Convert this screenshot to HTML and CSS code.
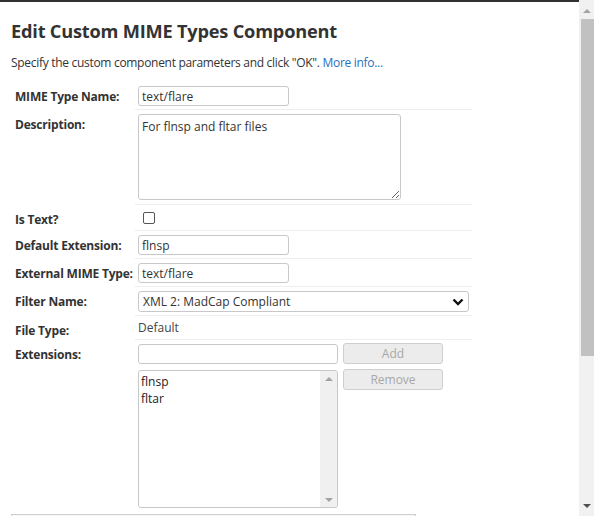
FILE: index.html
```html
<!DOCTYPE html>
<html lang="en">
<head>
  <meta charset="UTF-8">
  <title>Edit Custom MIME Types Component</title>
  <link rel="stylesheet" href="styles.css">
</head>
<body>
  <div class="window">
    <div class="page">
      <h1>Edit Custom MIME Types Component</h1>
      <p class="intro">Specify the custom component parameters and click "OK". <a href="#">More info...</a></p>

      <table class="form">
        <tr>
          <th>MIME Type Name:</th>
          <td><input type="text" class="short" value="text/flare"></td>
        </tr>
        <tr>
          <th>Description:</th>
          <td><textarea>For flnsp and fltar files</textarea></td>
        </tr>
        <tr>
          <th>Is Text?</th>
          <td class="check-cell"><span class="checkbox"></span></td>
        </tr>
        <tr>
          <th>Default Extension:</th>
          <td><input type="text" class="short" value="flnsp"></td>
        </tr>
        <tr>
          <th>External MIME Type:</th>
          <td><input type="text" class="short" value="text/flare"></td>
        </tr>
        <tr>
          <th>Filter Name:</th>
          <td>
            <div class="select">
              <span>XML 2: MadCap Compliant</span>
              <svg width="12" height="8" viewBox="0 0 12 8"><path d="M1.5 1.5 L6 6 L10.5 1.5" fill="none" stroke="#111" stroke-width="2.4"/></svg>
            </div>
          </td>
        </tr>
        <tr>
          <th>File Type:</th>
          <td class="plain">Default</td>
        </tr>
        <tr class="last">
          <th>Extensions:</th>
          <td>
            <div class="ext">
              <div class="ext-col">
                <input type="text" class="ext-input" value="">
                <div class="listbox">
                  <div class="items">
                    <div>flnsp</div>
                    <div>fltar</div>
                  </div>
                  <div class="track">
                    <span class="arrow up light"></span>
                    <span class="arrow down light"></span>
                  </div>
                </div>
              </div>
              <div class="btn-col">
                <button disabled>Add</button>
                <button disabled>Remove</button>
              </div>
            </div>
          </td>
        </tr>
      </table>

      <div class="next-box"></div>
    </div>

    <div class="scrollbar">
      <span class="arrow up light"></span>
      <div class="thumb"></div>
      <span class="arrow down dark"></span>
    </div>
  </div>
</body>
</html>
```

FILE: styles.css
```css
* {
  box-sizing: border-box;
}

html, body {
  margin: 0;
  height: 100%;
  overflow: hidden;
}

body {
  font-family: "Open Sans", "Noto Sans", sans-serif;
  font-size: 12px;
  color: #333;
  background: #fff;
}

.window {
  display: flex;
  height: 100%;
}

.page {
  flex: 1;
  border-top: 2px solid #2f3133;
  padding: 0 11px;
}

h1 {
  margin: 16px 0 0;
  font-size: 18.2px;
  line-height: 26px;
  font-weight: 700;
  color: #333;
  letter-spacing: -0.2px;
}

.intro {
  margin: 11px 0 11px;
  line-height: 16px;
  letter-spacing: -0.3px;
}

.intro a {
  color: #2870c2;
  text-decoration: none;
}

.form {
  border-collapse: collapse;
}

.form th {
  width: 124px;
  padding: 6px 0 0 4px;
  text-align: left;
  vertical-align: top;
  font-weight: 700;
  white-space: nowrap;
  letter-spacing: -0.2px;
}

.form td {
  width: 337px;
  padding: 4px 3px 3px;
  border-bottom: 1px solid #eeeeee;
  line-height: 0;
}

.form tr.last td {
  border-bottom: none;
  padding-bottom: 0;
}

input[type="text"],
textarea {
  font: inherit;
  font-size: 12px;
  color: #333;
  border: 1px solid #c8c8c8;
  border-radius: 3px;
  padding: 0 3px;
  background: #fff;
  line-height: 17px;
  display: block;
}

input.short {
  width: 151px;
  height: 20px;
}

textarea {
  width: 263px;
  height: 86px;
  padding: 3px 3px;
  margin-bottom: 1px;
  resize: both;
}

.check-cell {
  height: 26px;
}

.checkbox {
  display: block;
  width: 12px;
  height: 12px;
  margin: 0 0 0 5px;
  border: 1px solid #555;
  border-radius: 2px;
}

.select {
  display: flex;
  align-items: center;
  justify-content: space-between;
  width: 331px;
  height: 21px;
  padding: 0 4px 0 4px;
  border: 1px solid #c8c8c8;
  border-radius: 3px;
  line-height: 17px;
  font-size: 12px;
}

.plain {
  height: 24px;
  padding-top: 3px !important;
  line-height: 16px !important;
  color: #444;
}

.ext {
  display: flex;
  gap: 5px;
}

.ext-col {
  display: flex;
  flex-direction: column;
  gap: 6px;
  width: 200px;
}

.ext-input {
  width: 200px;
  height: 20px;
}

.listbox {
  display: flex;
  height: 138px;
  border: 1px solid #c8c8c8;
  border-radius: 3px;
  overflow: hidden;
}

.items {
  flex: 1;
  padding: 2px 2px;
  line-height: 17px;
  color: #222;
}

.track {
  width: 17px;
  background: #f0f0f0;
  display: flex;
  flex-direction: column;
  justify-content: space-between;
  align-items: center;
  padding: 6px 0 5px;
}

.arrow {
  width: 0;
  height: 0;
  border-left: 4px solid transparent;
  border-right: 4px solid transparent;
}

.arrow.up {
  border-bottom: 4px solid #a3a3a3;
}

.arrow.down {
  border-top: 4px solid #a3a3a3;
}

.arrow.down.dark {
  border-top-color: #505050;
}

.btn-col {
  display: flex;
  flex-direction: column;
  gap: 6px;
  padding-top: 0;
}

button {
  width: 100px;
  height: 21px;
  margin-top: -1px;
  font: inherit;
  font-size: 12px;
  color: #a8a8a8;
  background: #ececec;
  border: 1px solid #cfcfcf;
  border-radius: 3px;
  padding: 0;
  line-height: 17px;
}

.next-box {
  margin-top: 6px;
  width: 405px;
  height: 20px;
  border: 1px solid #cfcfcf;
  border-bottom: none;
  background: #f7f7f7;
}

.scrollbar {
  width: 15px;
  background: #f1f1f1;
  display: flex;
  flex-direction: column;
  align-items: center;
  padding: 9px 0 8px;
}

.scrollbar .thumb {
  width: 13px;
  margin-left: 2px;
  height: 337px;
  margin-top: 6px;
  background: #c1c1c1;
}

.scrollbar .arrow.down {
  margin-top: auto;
}
```
